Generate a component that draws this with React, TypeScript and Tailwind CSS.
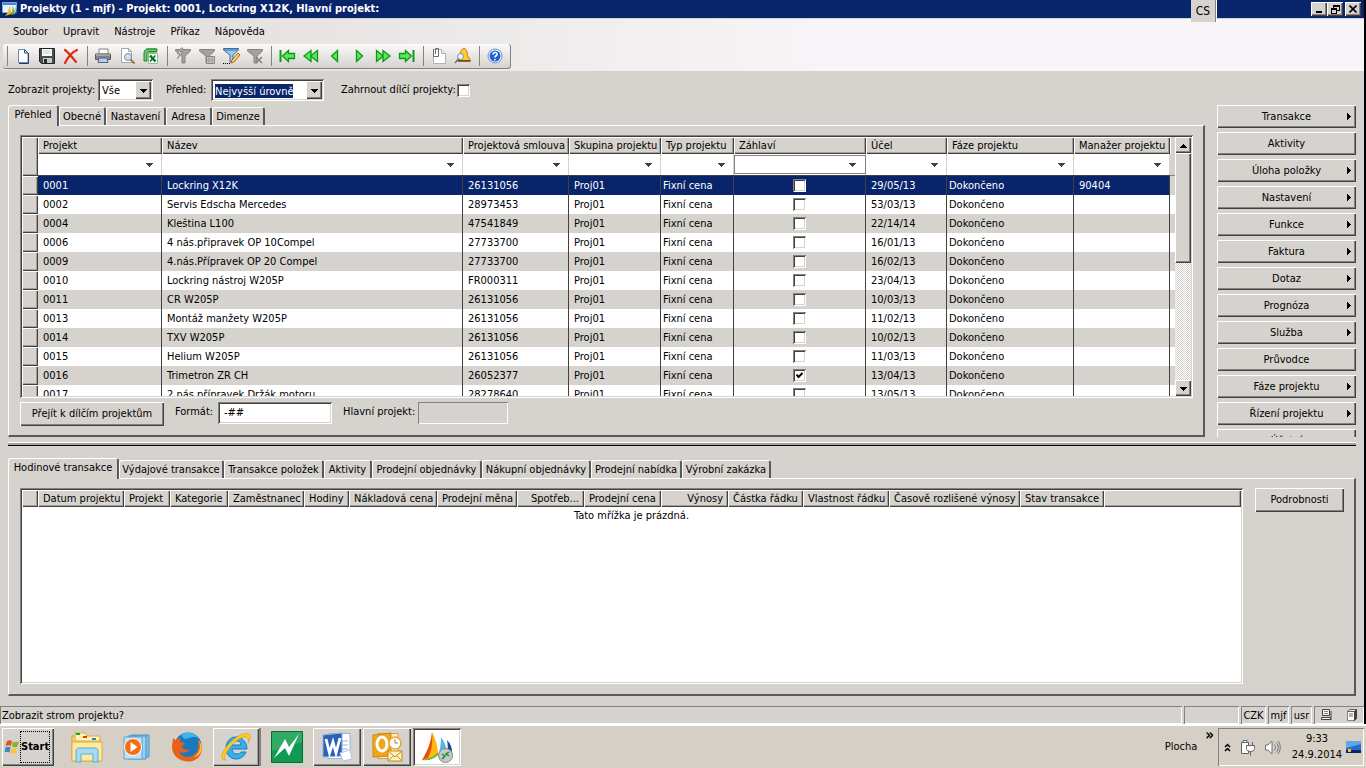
import { useState, type FC, type ReactNode } from 'react';
import clsx from 'clsx';

const RAISED = 'bg-[#d6d3ce] shadow-[inset_1px_1px_#ffffff,inset_-1px_-1px_#424142,inset_-2px_-2px_#848284]';
const SUNKEN = 'shadow-[inset_1px_1px_#848284,inset_-1px_-1px_#ffffff,inset_2px_2px_#424142,inset_-2px_-2px_#d6d3ce]';
const SUNKEN_THIN = 'shadow-[inset_1px_1px_#848284,inset_-1px_-1px_#ffffff]';
const HEADER_CELL = 'bg-[#d6d3ce] shadow-[inset_1px_1px_#ffffff,inset_-1px_-1px_#424142,inset_-2px_-2px_#a5a29c]';

interface Column {
  label: string;
  width: string;
  pad: string;
}

const COLUMNS: Column[] = [
  { label: 'Projekt', width: 'w-[124px]', pad: 'pl-[5px]' },
  { label: 'Název', width: '', pad: 'pl-[5px]' },
  { label: 'Projektová smlouva', width: 'w-[106px]', pad: 'pl-[5px]' },
  { label: 'Skupina projektu', width: 'w-[92px]', pad: 'pl-[5px]' },
  { label: 'Typ projektu', width: 'w-[73px]', pad: 'pl-[2px]' },
  { label: 'Záhlaví', width: 'w-[132px]', pad: '' },
  { label: 'Účel', width: 'w-[81px]', pad: 'pl-[5px]' },
  { label: 'Fáze projektu', width: 'w-[127px]', pad: 'pl-[2px]' },
  { label: 'Manažer projektu', width: 'w-[96px]', pad: 'pl-[5px]' },
];

interface Project {
  id: string;
  name: string;
  contract: string;
  header?: boolean;
  purpose: string;
  manager?: string;
}

const PROJECTS: Project[] = [
  { id: '0001', name: 'Lockring X12K', contract: '26131056', purpose: '29/05/13', manager: '90404' },
  { id: '0002', name: 'Servis Edscha Mercedes', contract: '28973453', purpose: '53/03/13' },
  { id: '0004', name: 'Kleština L100', contract: '47541849', purpose: '22/14/14' },
  { id: '0006', name: '4 nás.připravek OP 10Compel', contract: '27733700', purpose: '16/01/13' },
  { id: '0009', name: '4.nás.Přípravek OP 20 Compel', contract: '27733700', purpose: '16/02/13' },
  { id: '0010', name: 'Lockring nástroj W205P', contract: 'FR000311', purpose: '23/04/13' },
  { id: '0011', name: 'CR W205P', contract: '26131056', purpose: '10/03/13' },
  { id: '0013', name: 'Montáž manžety W205P', contract: '26131056', purpose: '11/02/13' },
  { id: '0014', name: 'TXV W205P', contract: '26131056', purpose: '10/02/13' },
  { id: '0015', name: 'Helium W205P', contract: '26131056', purpose: '11/03/13' },
  { id: '0016', name: 'Trimetron ZR CH', contract: '26052377', header: true, purpose: '13/04/13' },
  { id: '0017', name: '2 nás.přípravek Držák motoru', contract: '28278640', purpose: '13/05/13' },
];

const SIDE_BUTTONS = [
  { label: 'Transakce', menu: true },
  { label: 'Aktivity', menu: false },
  { label: 'Úloha položky', menu: true },
  { label: 'Nastavení', menu: true },
  { label: 'Funkce', menu: true },
  { label: 'Faktura', menu: true },
  { label: 'Dotaz', menu: true },
  { label: 'Prognóza', menu: true },
  { label: 'Služba', menu: true },
  { label: 'Průvodce', menu: false },
  { label: 'Fáze projektu', menu: true },
  { label: 'Řízení projektu', menu: true },
  { label: 'Účetní', menu: false },
];

const TOP_TABS = [
  { label: 'Přehled', width: 'w-[51px]' },
  { label: 'Obecné', width: 'w-[47px]' },
  { label: 'Nastavení', width: 'w-[60px]' },
  { label: 'Adresa', width: 'w-[46px]' },
  { label: 'Dimenze', width: 'w-[53px]' },
];

const LOWER_TABS = [
  { label: 'Hodinové transakce', width: 'w-[111px]' },
  { label: 'Výdajové transakce', width: 'w-[105px]' },
  { label: 'Transakce položek', width: 'w-[100px]' },
  { label: 'Aktivity', width: 'w-[48px]' },
  { label: 'Prodejní objednávky', width: 'w-[110px]' },
  { label: 'Nákupní objednávky', width: 'w-[109px]' },
  { label: 'Prodejní nabídka', width: 'w-[91px]' },
  { label: 'Výrobní zakázka', width: 'w-[89px]' },
];

const TRANSACTION_COLUMNS = [
  { label: 'Datum projektu', width: 'w-[86px]' },
  { label: 'Projekt', width: 'w-[46px]' },
  { label: 'Kategorie', width: 'w-[58px]' },
  { label: 'Zaměstnanec', width: 'w-[76px]' },
  { label: 'Hodiny', width: 'w-[45px]' },
  { label: 'Nákladová cena', width: 'w-[88px]' },
  { label: 'Prodejní měna', width: 'w-[80px]' },
  { label: 'Spotřeb...', width: 'w-[67px]', right: true },
  { label: 'Prodejní cena', width: 'w-[77px]' },
  { label: 'Výnosy', width: 'w-[67px]', right: true },
  { label: 'Částka řádku', width: 'w-[75px]' },
  { label: 'Vlastnost řádku', width: 'w-[86px]' },
  { label: 'Časově rozlišené výnosy', width: 'w-[131px]' },
  { label: 'Stav transakce', width: 'w-[84px]' },
];

const Icon: FC<{ children: ReactNode; size?: number; box?: number }> = ({ children, size = 18, box = 18 }) => (
  <svg width={size} height={size} viewBox={`0 0 ${box} ${box}`} aria-hidden="true" className="shrink-0">
    {children}
  </svg>
);

const Arrow: FC<{ dir?: 'down' | 'up' | 'right'; fill?: string }> = ({ dir = 'down', fill = '#000000' }) => (
  <svg width="7" height="7" viewBox="0 0 7 7" aria-hidden="true" shapeRendering="crispEdges">
    <path d={dir === 'down' ? 'M0 2h7L3.500 6z' : dir === 'up' ? 'M0 5.500h7L3.500 1.500z' : 'M2 0v7l4-3.500z'} fill={fill} />
  </svg>
);

const funnel = (
  <path d="M1.500 2.500h15v1.500L11 9v7H8V9L1.500 4z" fill="#a5a29c" stroke="#848284" />
);

const ICONS: Record<string, ReactNode> = {
  Nový: (
    <>
      <path d="M4.500 2.500h6l3.500 3.500v9.500H4.500z" fill="#ffffff" stroke="#6b86b5" />
      <path d="M14.500 6v10.500H5" fill="none" stroke="#213c6b" />
      <path d="M10.500 2.500V6H14z" fill="#cedbef" stroke="#395994" />
    </>
  ),
  Uložit: (
    <>
      <path d="M1.500 1.500h15v15h-13l-2-2z" fill="#4a4d4a" stroke="#212421" />
      <path d="M4 2h10v7H4z" fill="#f7fbff" />
      <path d="M5 4h8M5 6h8" stroke="#c6cbce" />
      <path d="M5 11h9v5H5z" fill="#c6c7c6" />
      <path d="M6 12h3v4H6z" fill="#292c29" />
    </>
  ),
  Odstranit: (
    <path d="M3 3c4 3 7 7 11 12M15 3C10 5 6 10 3 16" fill="none" stroke="#e72810" strokeWidth="2.200" strokeLinecap="round" />
  ),
  Tisk: (
    <>
      <path d="M5 2h9v5H5z" fill="#ffffff" stroke="#848284" />
      <path d="M1.500 7h15v5.500h-15z" fill="#848684" stroke="#5a5d5a" />
      <path d="M2 8h14" stroke="#c6c7c6" />
      <path d="M5 11h8l1 4.500H4z" fill="#adcfff" stroke="#5a6573" />
    </>
  ),
  Náhled: (
    <>
      <path d="M3.500 1.500h7l3 3v11h-10z" fill="#ffffff" stroke="#a5a6ad" />
      <path d="M10.500 1.500v3h3" fill="none" stroke="#a5a6ad" />
      <circle cx="10" cy="10" r="3.500" fill="#c6e3f7" stroke="#848a94" />
      <path d="m12.500 12.500 4 4" stroke="#a57142" strokeWidth="2" />
    </>
  ),
  Excel: (
    <>
      <path d="M4.500 1.500h10v4h-10z" fill="#ffffff" stroke="#7bba7b" />
      <path d="M2 14V6c0-3 2-4 5-4h8v2.500H8C5.500 4.500 5 6 5 7.500V14z" fill="#73c373" stroke="#218a31" />
      <path d="M6.500 6.500h9v10h-9z" fill="#f7fff7" stroke="#8cbe8c" />
      <path d="m8 8.500 5.500 6" stroke="#106b21" strokeWidth="2.500" />
      <path d="m13.500 8.500-5.500 6" stroke="#106b21" strokeWidth="1.500" />
    </>
  ),
  'Filtr podle výběru': (
    <>
      {funnel}
      <path d="M7 1 3 7h3l-3 5 6-7H6l3-4z" fill="#c6c3bd" stroke="#848284" strokeWidth=".7" />
    </>
  ),
  'Filtr podle mřížky': (
    <>
      {funnel}
      <path d="M8.500 9.500h8v7h-8z" fill="#d6d3ce" stroke="#848284" />
      <path d="M9 12h8M9 14h8M11 10v6M14 10v6" stroke="#9c9a94" />
    </>
  ),
  'Rozšířený filtr': (
    <>
      <path d="M1.500 1.500h15V3L11 8v7H8V8L1.500 3z" fill="#9ccbef" stroke="#4a6d8c" />
      <path d="M2 3h14" stroke="#4a8ac6" strokeWidth="1.500" />
      <path d="m9 16 1-3 6-7 2 2-6 7z" fill="#ffcf63" stroke="#a56521" />
      <path d="M1 16.500h8" stroke="#000000" strokeDasharray="1 1" />
    </>
  ),
  'Odebrat filtr': (
    <>
      {funnel}
      <path d="m10 10 6 6M16 10l-6 6" stroke="#848284" strokeWidth="1.500" />
    </>
  ),
  První: (
    <>
      <path d="M2.500 3v12" stroke="#089a18" strokeWidth="2" />
      <path d="m4.500 9 6-5.500v3h6v5h-6v3z" fill="#63e35a" stroke="#089a18" strokeWidth="1.300" />
    </>
  ),
  'Předchozí strana': (
    <>
      <path d="m8.500 9 7-5.500v11z" fill="#63e35a" stroke="#089a18" strokeWidth="1.300" />
      <path d="m2 9 7-5.500v11z" fill="#63e35a" stroke="#089a18" strokeWidth="1.300" />
    </>
  ),
  Předchozí: <path d="m5.500 9 6-5.500v11z" fill="#63e35a" stroke="#089a18" strokeWidth="1.300" />,
  Další: <path d="m12.500 9-6-5.500v11z" fill="#63e35a" stroke="#089a18" strokeWidth="1.300" />,
  'Další strana': (
    <>
      <path d="m9.500 9-7-5.500v11z" fill="#63e35a" stroke="#089a18" strokeWidth="1.300" />
      <path d="m16 9-7-5.500v11z" fill="#63e35a" stroke="#089a18" strokeWidth="1.300" />
    </>
  ),
  Poslední: (
    <>
      <path d="M15.500 3v12" stroke="#089a18" strokeWidth="2" />
      <path d="m13.500 9-6-5.500v3h-6v5h6v3z" fill="#63e35a" stroke="#089a18" strokeWidth="1.300" />
    </>
  ),
  Dokumenty: (
    <>
      <path d="M3.500 2.500h8l4 4v10h-12z" fill="#ffffff" stroke="#b5b2b5" />
      <path d="M3.500 2v7.500h5v-8h-3V7" fill="none" stroke="#6b6d6b" />
      <path d="M11.500 2.500v4h4" fill="#e7e7e7" stroke="#b5b2b5" />
    </>
  ),
  Upozornění: (
    <>
      <path d="M10 1.500c2.500 0 3 3 3.500 7l3 5H4l2-5c.5-4 1.500-7 4-7z" fill="#ffcb31" stroke="#bd7d08" />
      <path d="M4 14h12.500" stroke="#634108" strokeWidth="1.500" />
      <circle cx="6.500" cy="9.500" r="3" fill="#e7f3ff" stroke="#848a94" />
      <path d="m4.500 12-3.500 4" stroke="#6b6d6b" strokeWidth="1.500" />
    </>
  ),
  Nápověda: (
    <>
      <circle cx="9" cy="9" r="7" fill="#f7fbff" stroke="#6b8ec6" />
      <circle cx="9" cy="9" r="5.500" fill="#2161d6" />
      <path d="M7 7.500C7 4.500 11.500 5 11 7.500 10.700 9 9 8.500 9 10.500M9 12v1.300" fill="none" stroke="#ffffff" strokeWidth="1.600" />
    </>
  ),
};

const TOOL_GROUPS = [
  ['Nový', 'Uložit', 'Odstranit'],
  ['Tisk', 'Náhled', 'Excel'],
  ['Filtr podle výběru', 'Filtr podle mřížky', 'Rozšířený filtr', 'Odebrat filtr'],
  ['První', 'Předchozí strana', 'Předchozí', 'Další', 'Další strana', 'Poslední'],
  ['Dokumenty', 'Upozornění'],
  ['Nápověda'],
];

const DynamicsLogo: FC = () => (
  <Icon size={32} box={32}>
    <path d="M1 29C6 21 10 12 11 1c4 8 6 15 6 22-4 4-9 6-16 6z" fill="#ffba10" />
    <path d="M1 29C6 21 10 12 11 1c1 10 0 18-4 26z" fill="#e75118" />
    <path d="M1 29c7-1 12-3 16-8v3c-4 4-9 6-16 5z" fill="#6bb631" />
    <path d="M17 25c2-6 3-12 3-19 4 6 6 11 6 16-3 3-6 4-9 3z" fill="#52b6e7" />
    <path d="M26 24c1-5 1-10 0-15 4 4 5 8 5 12-1 2-3 3-5 3z" fill="#184994" />
  </Icon>
);

const TitleBar: FC = () => (
  <header className="relative flex h-[18px] items-center bg-[#08246b] pl-[2px] pr-[3px] text-white">
    <svg width="16" height="16" viewBox="0 0 16 16" aria-hidden="true" className="mr-[2px]">
      <path d="M.500 1.500h14v10H.500z" fill="#e7f3ff" stroke="#7ba6de" />
      <path d="M1 2h13v2H1z" fill="#4a86d6" />
      <path d="M3 15c3-3 4-6 4-10 2 3 2 6 2 8z" fill="#ffb610" />
      <path d="M9 14c1-3 2-6 1-9 2 2 3 5 3 8z" fill="#7bb631" />
      <path d="M13 13c1-3 1-5 0-7 2 2 2 4 2 6z" fill="#2969b5" />
    </svg>
    <h1 className="flex-1 truncate text-[11px] font-bold leading-4">
      Projekty (1 - mjf) - Projekt: 0001, Lockring X12K, Hlavní projekt:
    </h1>
    <div className="absolute right-[148px] top-0 z-10 flex h-[22px] w-[25px] items-center justify-center border-r border-[#848284] bg-[#d6d3ce] text-[12px] text-black shadow-[1px_0_#ffffff]">
      CS
    </div>
    <button aria-label="Minimalizovat" className={clsx(RAISED, 'flex h-[14px] w-4 items-center justify-center')}>
      <svg width="8" height="8" viewBox="0 0 8 8"><path d="M1 6h6v2H1z" /></svg>
    </button>
    <button aria-label="Obnovit" className={clsx(RAISED, 'mr-[2px] flex h-[14px] w-4 items-center justify-center')}>
      <svg width="9" height="9" viewBox="0 0 9 9" fill="none" stroke="#000000" shapeRendering="crispEdges">
        <path d="M2.500 3V.500h6v5H6M2 1h7M.500 3.500h5v5h-5zM0 4h6" />
      </svg>
    </button>
    <button aria-label="Zavřít" className={clsx(RAISED, 'flex h-[14px] w-4 items-center justify-center')}>
      <svg width="8" height="8" viewBox="0 0 8 8" stroke="#000000" strokeWidth="1.600"><path d="m.500.500 7 7m0-7-7 7" /></svg>
    </button>
  </header>
);

const MenuAndTools: FC = () => (
  <div className="border-t border-[#d6d3ce] bg-linear-to-r from-[#dedbd6] to-[#f7f5f7] to-60% pb-[2px]">
    <nav className="flex h-[25px] items-center gap-[15px] pl-[13px]">
      {['Soubor', 'Upravit', 'Nástroje', 'Příkaz', 'Nápověda'].map((item) => (
        <button key={item} className="text-[11px]">{item}</button>
      ))}
    </nav>
    <div
      role="toolbar"
      className="ml-[3px] flex h-[25px] w-max items-center rounded-[3px] border-b border-r border-[#848284] bg-linear-to-b from-[#fbfafb] to-[#d6d3ce] pr-[3px]"
    >
      {TOOL_GROUPS.map((group) => (
        <div key={group[0]} className="flex items-center">
          <span className="ml-1 mr-[3px] h-5 w-px bg-[#848284]" />
          {group.map((name) => (
            <button key={name} aria-label={name} className="flex h-6 w-6 items-center justify-center">
              <Icon>{ICONS[name]}</Icon>
            </button>
          ))}
        </div>
      ))}
    </div>
  </div>
);

const DropButton: FC = () => (
  <span className={clsx(RAISED, 'pointer-events-none flex w-4 items-center justify-center self-stretch')}>
    <Arrow />
  </span>
);

const FilterBar: FC = () => (
  <div className="flex h-[34px] items-center pl-2 pt-[4px]">
    <label htmlFor="show" className="w-[90px]">Zobrazit projekty:</label>
    <div className={clsx(SUNKEN, 'flex h-[22px] w-[55px] bg-white p-[2px]')}>
      <select id="show" className="min-w-0 flex-1 appearance-none pl-[2px] pt-[2px]">
        <option>Vše</option>
      </select>
      <DropButton />
    </div>
    <label htmlFor="overview" className="ml-[13px] w-[45px]">Přehled:</label>
    <div className={clsx(SUNKEN, 'flex h-[22px] w-[113px] items-center bg-white p-[2px]')}>
      <select id="overview" className="ml-[2px] mt-[2px] h-[14px] w-[78px] appearance-none bg-[#08246b] leading-[13px] text-white">
        <option>Nejvyšší úrovně</option>
      </select>
      <span className="flex-1" />
      <DropButton />
    </div>
    <label htmlFor="include" className="ml-[17px] w-[116px]">Zahrnout dílčí projekty:</label>
    <CheckBox id="include" />
  </div>
);

const CheckBox: FC<{ id?: string; label?: string; checked?: boolean }> = ({ id, label, checked = false }) => (
  <span className="relative inline-block h-[13px] w-[13px] align-top">
    <input
      id={id}
      type="checkbox"
      aria-label={label}
      defaultChecked={checked}
      className={clsx(SUNKEN, 'peer block h-[13px] w-[13px] appearance-none bg-white')}
    />
    <svg
      className="pointer-events-none absolute left-[3px] top-[3px] hidden peer-checked:block"
      width="7" height="7" viewBox="0 0 7 7" fill="none" stroke="#000000" strokeWidth="2"
    >
      <path d="m.500 2.500 2 2.500L6.500 1" />
    </svg>
  </span>
);

interface TabsProps {
  tabs: Array<{ label: string; width: string }>;
  active: number;
  onSelect: (index: number) => void;
}

const Tabs: FC<TabsProps> = ({ tabs, active, onSelect }) => (
  <div role="tablist" className="flex h-[20px] items-end">
    {tabs.map((tab, i) => (
      <button
        key={tab.label}
        role="tab"
        aria-selected={i === active}
        onClick={() => onSelect(i)}
        className={clsx(
          tab.width,
          'shrink-0 whitespace-nowrap rounded-t-[3px] border-l border-r-2 border-t border-l-white border-r-[#5a595a] border-t-white bg-[#d6d3ce] text-center',
          i === active ? 'relative -mb-px h-[21px] pb-[3px]' : 'h-[18px]',
        )}
      >
        {tab.label}
      </button>
    ))}
  </div>
);

const PANEL = 'border-b-2 border-l border-r-2 border-t border-b-[#5a595a] border-l-white border-r-[#5a595a] border-t-white';

const ProjectGrid: FC = () => {
  const [selected, setSelected] = useState(0);
  return (
    <div className={clsx(SUNKEN, 'flex h-[263px] p-[2px]')}>
      <div className="min-w-0 flex-1 overflow-hidden bg-[#d6d3ce]">
        <table className="w-full table-fixed border-separate border-spacing-0">
          <thead>
            <tr className="h-[17px]">
              <th rowSpan={2} className={clsx(HEADER_CELL, 'w-4 p-0')} />
              {COLUMNS.map((col) => (
                <th key={col.label} className={clsx(HEADER_CELL, col.width, 'h-[17px] whitespace-nowrap p-0 pl-[5px] text-left font-normal leading-4')}>
                  {col.label}
                </th>
              ))}
              <th className="w-[5px] border-l border-white p-0" />
            </tr>
            <tr>
              {COLUMNS.map((col) => (
                <td key={col.label} className="h-[22px] border-b border-[#424142] bg-white p-0 shadow-[inset_-1px_0_#d6d3ce]">
                  <button
                    aria-label={`Filtr: ${col.label}`}
                    className={clsx(
                      'flex h-[19px] w-full items-center justify-end pr-[9px]',
                      col.label === 'Záhlaví' && 'border border-[#848284]',
                    )}
                  >
                    <Arrow fill="#424142" />
                  </button>
                </td>
              ))}
              <td className="border-b border-[#848284] p-0" />
            </tr>
          </thead>
          <tbody>
            {PROJECTS.map((p, row) => {
              const cells = [
                p.id, p.name, p.contract, 'Proj01', 'Fixní cena',
                <CheckBox label={`Záhlaví ${p.id}`} checked={p.header} />,
                p.purpose, 'Dokončeno', p.manager,
              ];
              const tone = row === selected ? 'bg-[#08246b] text-white' : row % 2 === 0 ? 'bg-[#d6d3ce]' : 'bg-white';
              return (
                <tr key={p.id} className="h-[19px]" onClick={() => setSelected(row)}>
                  <td className={clsx(HEADER_CELL, 'p-0')} />
                  {cells.map((cell, i) => (
                    <td
                      key={COLUMNS[i].label}
                      className={clsx(tone, COLUMNS[i].pad, 'h-[19px] whitespace-nowrap border-r border-[#424142] p-0 leading-[18px]')}
                    >
                      {i === 5 ? <span className="flex justify-center">{cell}</span> : cell}
                    </td>
                  ))}
                  <td className={clsx('p-0', row !== selected && tone)} />
                </tr>
              );
            })}
          </tbody>
        </table>
      </div>
      <div className="flex w-4 flex-col bg-[repeating-conic-gradient(#ffffff_0_25%,#d6d3ce_0_50%)] bg-size-[2px_2px]">
        <button aria-label="Nahoru" className={clsx(RAISED, 'flex h-4 items-center justify-center')}><Arrow dir="up" /></button>
        <div className={clsx(RAISED, 'h-[110px]')} />
        <span className="flex-1" />
        <button aria-label="Dolů" className={clsx(RAISED, 'flex h-4 items-center justify-center')}><Arrow /></button>
      </div>
    </div>
  );
};

const UpperSection: FC = () => {
  const [tab, setTab] = useState(0);
  return (
    <section className="flex gap-3 pl-2 pr-2">
      <div className="min-w-0 flex-1">
        <Tabs tabs={TOP_TABS} active={tab} onSelect={setTab} />
        <div className={clsx(PANEL, 'h-[312px] pl-[11px] pr-[10px] pt-[9px]')}>
          <ProjectGrid />
          <div className="flex pt-[4px]">
            <button className={clsx(RAISED, 'h-6 w-[144px]')}>Přejít k dílčím projektům</button>
            <label htmlFor="format" className="ml-[11px] w-[43px] pt-[2px]">Formát:</label>
            <input id="format" defaultValue="-##" className={clsx(SUNKEN, 'h-[22px] w-[114px] bg-white px-[6px] pb-[2px]')} />
            <label htmlFor="main-project" className="ml-[11px] w-[75px] pt-[2px]">Hlavní projekt:</label>
            <input id="main-project" readOnly className={clsx(SUNKEN_THIN, 'h-[22px] w-[90px] px-[6px]')} />
          </div>
        </div>
      </div>
      <div className="flex h-[332px] w-[139px] shrink-0 flex-col gap-[4px] overflow-hidden">
        {SIDE_BUTTONS.map((b) => (
          <button key={b.label} className={clsx(RAISED, 'relative h-[23px] w-full shrink-0 text-center')}>
            {b.label}
            {b.menu && <span className="absolute right-[4px] top-2"><Arrow dir="right" /></span>}
          </button>
        ))}
      </div>
    </section>
  );
};

const LowerSection: FC = () => {
  const [tab, setTab] = useState(0);
  return (
    <section className="flex min-h-0 flex-1 flex-col pl-2 pr-2 pt-3">
      <Tabs tabs={LOWER_TABS} active={tab} onSelect={setTab} />
      <div className={clsx(PANEL, 'flex flex-1 gap-3 pb-[10px] pl-[11px] pr-[10px] pt-[9px]')}>
        <div className={clsx(SUNKEN, 'min-w-0 flex-1 bg-white p-[2px]')}>
          <table className="w-full table-fixed border-separate border-spacing-0">
            <thead>
              <tr className="h-[17px]">
                <th className={clsx(HEADER_CELL, 'w-4 p-0')} />
                {TRANSACTION_COLUMNS.map((col) => (
                  <th
                    key={col.label}
                    className={clsx(HEADER_CELL, col.width, 'h-[17px] whitespace-nowrap p-0 px-[5px] font-normal leading-4', col.right ? 'text-right' : 'text-left')}
                  >
                    {col.label}
                  </th>
                ))}
                <th className={clsx(HEADER_CELL, 'p-0')} />
              </tr>
            </thead>
            <tbody>
              <tr>
                <td colSpan={16} className="p-0 text-center leading-[17px]">Tato mřížka je prázdná.</td>
              </tr>
            </tbody>
          </table>
        </div>
        <button className={clsx(RAISED, 'h-6 w-[89px] shrink-0')}>Podrobnosti</button>
      </div>
    </section>
  );
};

const StatusBar: FC = () => (
  <footer className="flex h-[18px] gap-[2px] leading-[19px]">
    <div className={clsx(SUNKEN_THIN, 'flex-1 pl-[2px]')}>Zobrazit strom projektu?</div>
    <div className={clsx(SUNKEN_THIN, 'w-[55px]')} />
    <div className={clsx(SUNKEN_THIN, 'w-[25px] text-center')}>CZK</div>
    <div className={clsx(SUNKEN_THIN, 'w-[21px] text-center')}>mjf</div>
    <div className={clsx(SUNKEN_THIN, 'w-[21px] text-center')}>usr</div>
    <div className={clsx(SUNKEN_THIN, 'flex w-[50px] items-center justify-between px-[6px]')}>
      <Icon size={12} box={12}>
        <path d="M2.500.500h7v6h-7z" fill="#f7f7f7" stroke="#424142" />
        <path d="M4 2.500h4M4 4.500h4" stroke="#848284" />
        <path d="M1.500 8.500h9v2h-9z" fill="#ffffff" stroke="#424142" />
        <path d="M11 2v9" stroke="#424142" />
      </Icon>
      <Icon size={12} box={12}>
        <path d="M1.500 2.500h7v9h-7z" fill="#ffffff" stroke="#848684" />
        <path d="m1.500 2.500 2-2h7l-2 2z" fill="#e7e7e7" stroke="#636563" />
        <path d="m8.500 2.500 2-2v9l-2 2z" fill="#424142" stroke="#424142" />
        <path d="M3 5h4M3 7h4" stroke="#636563" />
      </Icon>
    </div>
  </footer>
);

const TaskButton: FC<{ label: string; look?: string; children: ReactNode }> = ({ label, look, children }) => (
  <button aria-label={label} className={clsx('flex h-[38px] w-12 shrink-0 items-center justify-center', look)}>
    {children}
  </button>
);

const STACKED = 'bg-[#d6d3ce] border-r-2 border-r-[#848284] shadow-[inset_1px_1px_#ffffff,inset_-1px_-1px_#424142,inset_-2px_-2px_#a5a29c]';

const Taskbar: FC = () => (
  <div className="flex h-[44px] items-center border-t-2 border-white bg-[#d6cfc6] pl-[2px] pr-[2px]">
    <button className={clsx(RAISED, 'flex h-[38px] w-[52px] items-center pl-[2px] font-bold')}>
      <svg width="16" height="16" viewBox="0 0 16 16" aria-hidden="true" className="shrink-0">
        <path d="M3 2c2-1 3-1 5 0L7 7C5 6 4 6 1.500 7z" fill="#e7511c" />
        <path d="M9 2.500c2 1 3 1 6 0L13.500 7.500c-2 1-4 1-5.500 0z" fill="#7bb631" />
        <path d="M1.500 8.500c2-1 3-1 5 0l-1 5c-2-1-3-1-5 0z" fill="#3986ce" />
        <path d="M7.500 9c2 1 3 1 5.500 0l-1.500 5c-2 1-3 1-5 0z" fill="#ffc621" />
      </svg>
      <span className="flex h-8 items-center border border-dotted border-black text-[11px]">Start</span>
    </button>
    <div className="ml-[9px] flex gap-[2px]">
      <TaskButton label="Průzkumník">
        <Icon size={32} box={32}>
          <path d="M1 5h10l2 3h16v22H1z" fill="#f7d573" stroke="#ce9e39" />
          <path d="M4 2h10l2 3h13v5H4z" fill="#fff3ad" stroke="#d6ae52" />
          <path d="M5 2h4v2H5z" fill="#08a610" />
          <path d="M12 5h4v2h-4z" fill="#d64110" />
          <path d="M21 7h4v2h-4z" fill="#2986ce" />
          <path d="M1 11h30v19H1z" fill="#ffeb9c" stroke="#d6ae52" />
          <path d="M5 31V20c0-2 1-3 3-3h16c2 0 3 1 3 3v11h-5v-8H10v8z" fill="#a5dbf7" stroke="#5aaad6" />
        </Icon>
      </TaskButton>
      <TaskButton label="Přehrávač médií">
        <Icon size={32} box={32}>
          <path d="M10 4h18v22H10z" fill="#84bee7" stroke="#4a92c6" />
          <path d="M7 5h18v23H7z" fill="#9ccfef" stroke="#4a92c6" />
          <path d="M3 6h18v22H3z" fill="#bde3f7" stroke="#5aa2d6" />
          <circle cx="12" cy="16" r="8.500" fill="#f76d10" stroke="#ffffff" />
          <path d="m9.500 11 7 5-7 5z" fill="#ffffff" />
        </Icon>
      </TaskButton>
      <TaskButton label="Firefox">
        <Icon size={32} box={32}>
          <circle cx="17" cy="15" r="13.500" fill="#1879bd" />
          <path d="M10 4c7-4 14-2 17 3-6-3-9 1-14 1z" fill="#39b6ef" />
          <path d="M2 7c1 1 2 2 3 2 2-2 4-2 5-2-1 2-1 3 0 4l4 1c-1 2-3 2-3 4 1 3 5 3 8 2-2 4-8 5-11 2 2 7 12 8 17 2 3-4 3-10 1-14 6 6 6 14 1 19C18 35 1 29 1 16c0-4 1-6 1-9z" fill="#e7611c" />
          <path d="M27 8c4 7 2 14-4 18 8-1 10-11 4-18z" fill="#ffc331" />
        </Icon>
      </TaskButton>
      <TaskButton label="Internet Explorer" look={STACKED}>
        <Icon size={32} box={32}>
          <path d="M26 21c-2 5-6 7-10 7C10 28 6 23 6 17S10 6 16 6s11 5 11 12H12c0 3 2 5 5 5 2 0 3-1 4-2zM12 14h9c0-3-2-4-4-4s-5 1-5 4z" fill="#39aee7" stroke="#107dc6" />
          <path d="M3 29c-3-3 0-11 8-18C19 3 28 0 30 4c1 2 0 5-2 8 1-4 0-6-3-6-4 0-10 4-15 10-5 7-7 12-4 13z" fill="#ffcb21" stroke="#d69a10" strokeWidth=".6" />
        </Icon>
      </TaskButton>
      <TaskButton label="Blesk">
        <Icon size={32} box={32}>
          <path d="M.500.500h31v31H.500z" fill="#109a52" stroke="#086b39" />
          <path d="M1 1h30v10L1 20z" fill="#31aa63" />
          <path d="M3 27 14 8l4 8L28 3 18 25l-4-8z" fill="#ffffff" />
        </Icon>
      </TaskButton>
      <TaskButton label="Word" look={RAISED}>
        <Icon size={32} box={32}>
          <path d="M7 2.500h22v25H7z" fill="#ffffff" stroke="#9cb2d6" />
          <path d="M16 10h11M16 14h11M16 18h11" stroke="#9cb6de" />
          <path d="M2 4 21 2v23L2 26z" fill="#2961b5" stroke="#8cb2e7" />
          <path d="m5 8 3.500 14L12 11l3 11 4-15" fill="none" stroke="#ffffff" strokeWidth="2.800" />
          <path d="m19 22 10-3 2 9-9 2z" fill="#ffffff" stroke="#b5c3de" />
        </Icon>
      </TaskButton>
      <TaskButton label="Outlook" look={RAISED}>
        <Icon size={32} box={32}>
          <path d="M7 2.500h20v25H7z" fill="#fff3ce" stroke="#d69e31" />
          <path d="M2 4 20 2v23L2 26z" fill="#efa618" stroke="#ce8610" />
          <ellipse cx="11" cy="13" rx="5" ry="7" fill="none" stroke="#ffffff" strokeWidth="3" />
          <circle cx="24" cy="12" r="6" fill="#ffffff" stroke="#e7a639" strokeWidth="1.500" />
          <path d="M24 8v4h3" fill="none" stroke="#b57510" />
          <path d="M17 20h14v10H17z" fill="#fff3bd" stroke="#c68a21" />
          <path d="m17 20 7 6 7-6M17 30l5-5M31 30l-5-5" fill="none" stroke="#c68a21" />
        </Icon>
      </TaskButton>
      <TaskButton label="Dynamics AX" look={clsx('bg-white', SUNKEN)}>
        <span className="relative">
          <DynamicsLogo />
          <svg className="absolute bottom-0 right-0" width="15" height="15" viewBox="0 0 15 15">
            <circle cx="7.500" cy="7.500" r="7" fill="#c6c7c6" stroke="#848684" />
            <path d="m4 6 3 2-3 3M11 4 8 6l3 2" fill="none" stroke="#188a31" strokeWidth="1.500" />
          </svg>
        </span>
      </TaskButton>
    </div>
    <div className="flex-1" />
    <button>Plocha</button>
    <span className="ml-2 self-start pt-px text-[15px] font-bold leading-4">»</span>
    <div className={clsx(SUNKEN_THIN, 'ml-[4px] flex h-[38px] items-center pl-[5px] pr-[3px]')}>
      <button aria-label="Zobrazit skryté ikony">
        <svg width="9" height="9" viewBox="0 0 9 9" fill="none" stroke="#000000" strokeWidth="1.500">
          <path d="m2 4 2.500-2.500L7 4M2 8l2.500-2.500L7 8" />
        </svg>
      </button>
      <svg className="ml-2" width="17" height="17" viewBox="0 0 17 17" fill="#ffffff" stroke="#636163" aria-hidden="true">
        <path d="M1.500 3.500h7v11h-7zM3 3V1.500h4V3" />
        <path d="M6.500 6.500h8v3c0 2-2 3-4 3s-4-1-4-3zM8.500 6V3M12.500 6V3M10.500 13v3.500" />
      </svg>
      <svg className="ml-[7px]" width="17" height="17" viewBox="0 0 17 17" fill="#ffffff" stroke="#737173" aria-hidden="true">
        <path d="M1.500 6v5H4l4 4V2L4 6z" />
        <path d="M10 5.500c2 2 2 4 0 6M12 3.500c3 3 3 7 0 10M14 2c3 4 3 9 0 13" fill="none" />
      </svg>
      <div className="ml-[9px] w-[54px] text-center leading-[16px]">
        <div>9:33</div>
        <div>24.9.2014</div>
      </div>
      <svg className="ml-[2px]" width="15" height="12" viewBox="0 0 15 12" aria-hidden="true">
        <path d="M0 0h15v9H0z" fill="#2171c6" />
        <path d="M0 0h15v3L0 7z" fill="#63a6e7" />
        <path d="M0 9h15v3H0z" fill="#08246b" />
        <path d="M2 8h3v3H2z" fill="#ffc331" />
      </svg>
    </div>
  </div>
);

export default function App() {
  return (
    <div className="flex h-screen flex-col overflow-hidden bg-[#d6d3ce] font-['DejaVu_Sans_Condensed','Noto_Sans',sans-serif] text-[11px] leading-4 text-black">
      <div className="flex min-h-0 flex-1 flex-col border-r-2 border-black">
        <TitleBar />
        <MenuAndTools />
        <FilterBar />
        <UpperSection />
        <div className="ml-2 mr-2 mt-[5px] h-[4px] border-b border-t border-b-black border-t-white bg-[#a5a29c]" />
        <LowerSection />
        <div className="h-[10px]" />
        <StatusBar />
      </div>
      <Taskbar />
    </div>
  );
}
